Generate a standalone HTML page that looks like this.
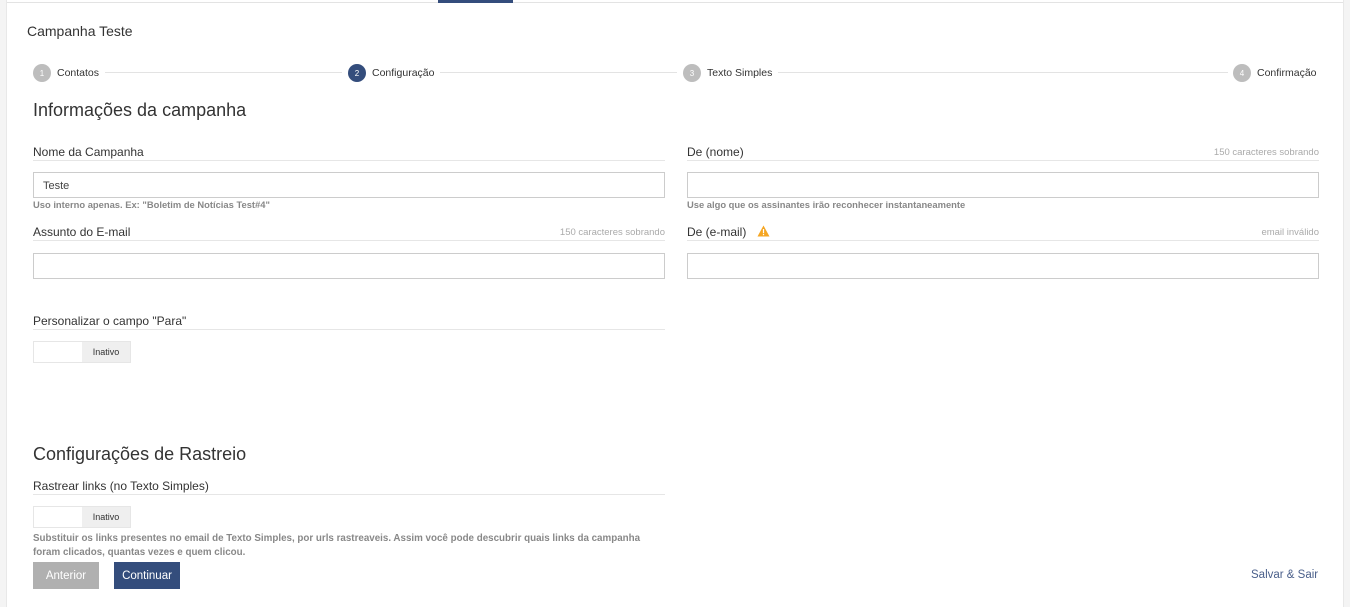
<!DOCTYPE html>
<html><head><meta charset="utf-8"><style>
*{box-sizing:border-box;margin:0;padding:0}
body{width:1350px;height:607px;overflow:hidden;background:#fff;font-family:"Liberation Sans",sans-serif;color:#333;position:relative}
.a{position:absolute}
.lstrip{left:0;top:0;width:7px;height:607px;background:#f4f4f4;border-right:1px solid #e8e8e8}
.rstrip{left:1343px;top:0;width:7px;height:607px;background:#f4f4f4;border-left:1px solid #e8e8e8}
.topline{left:7px;top:2px;width:1336px;height:1px;background:#e3e3e3}
.tab{left:438px;top:0;width:75px;height:3px;background:#344d7c}
.step{font-size:10.5px;color:#333;display:flex;align-items:center;white-space:nowrap}
.c{width:18px;height:18px;border-radius:50%;background:#bdbdbd;color:#fff;font-size:8px;display:flex;align-items:center;justify-content:center;margin-right:6px}
.c.on{background:#344d7c}
.sl{height:1px;background:#e3e3e3;top:72px}
h2{font-weight:normal;font-size:18px;color:#333}
.lbl{font-size:12px;color:#333;border-bottom:1px solid #e6e6e6;height:16px;width:632px}
.cnt{font-size:9.5px;color:#aaa;float:right;margin-top:2px}
.inp{height:26px;width:632px;border:1px solid #ccc;font-size:11px;padding:7px 9px;color:#444}
.help{font-size:9.4px;color:#888;font-weight:bold;line-height:14px}
.tog{width:98px;height:22px;border:1px solid #e6e6e6;display:flex}
.tog span{margin-left:48px;width:48px;background:#efefef;font-size:9px;color:#333;display:flex;align-items:center;justify-content:center}
.btn{height:27px;font-size:11.5px;color:#fff;display:flex;align-items:center;justify-content:center}
</style></head><body>
<div class="a lstrip"></div><div class="a rstrip"></div>
<div class="a topline"></div><div class="a tab"></div>
<div class="a" style="left:27px;top:23px;font-size:14px;color:#333">Campanha Teste</div>

<div class="a step" style="left:33px;top:64px"><div class="c">1</div>Contatos</div>
<div class="a sl" style="left:105px;width:237px"></div>
<div class="a step" style="left:348px;top:64px"><div class="c on">2</div>Configuração</div>
<div class="a sl" style="left:440px;width:237px"></div>
<div class="a step" style="left:683px;top:64px"><div class="c">3</div>Texto Simples</div>
<div class="a sl" style="left:778px;width:450px"></div>
<div class="a step" style="left:1233px;top:64px"><div class="c">4</div>Confirmação</div>

<h2 class="a" style="left:33px;top:100px">Informações da campanha</h2>

<div class="a lbl" style="left:33px;top:145px">Nome da Campanha</div>
<div class="a inp" style="left:33px;top:172px">Teste</div>
<div class="a help" style="left:33px;top:198px">Uso interno apenas. Ex: "Boletim de Notícias Test#4"</div>

<div class="a lbl" style="left:687px;top:145px">De (nome)<span class="cnt">150 caracteres sobrando</span></div>
<div class="a inp" style="left:687px;top:172px"></div>
<div class="a help" style="left:687px;top:198px">Use algo que os assinantes irão reconhecer instantaneamente</div>

<div class="a lbl" style="left:33px;top:225px">Assunto do E-mail<span class="cnt">150 caracteres sobrando</span></div>
<div class="a inp" style="left:33px;top:253px"></div>

<div class="a lbl" style="left:687px;top:225px">De (e-mail) <svg width="13" height="12" viewBox="0 0 13 12" style="margin-left:7px;vertical-align:-1px"><path d="M6.5 0.5L12.5 11.5H0.5Z" fill="#f5a623"/><rect x="5.9" y="4" width="1.2" height="4.2" fill="#fff"/><rect x="5.9" y="9" width="1.2" height="1.2" fill="#fff"/></svg><span class="cnt">email inválido</span></div>
<div class="a inp" style="left:687px;top:253px"></div>

<div class="a lbl" style="left:33px;top:314px">Personalizar o campo "Para"</div>
<div class="a tog" style="left:33px;top:341px"><span>Inativo</span></div>

<h2 class="a" style="left:33px;top:444px">Configurações de Rastreio</h2>
<div class="a lbl" style="left:33px;top:479px">Rastrear links (no Texto Simples)</div>
<div class="a tog" style="left:33px;top:506px"><span>Inativo</span></div>
<div class="a help" style="left:33px;top:532px;width:640px;font-size:9.8px;white-space:nowrap">Substituir os links presentes no email de Texto Simples, por urls rastreaveis. Assim você pode descubrir quais links da campanha<br>foram clicados, quantas vezes e quem clicou.</div>

<div class="a btn" style="left:33px;top:562px;width:66px;background:#b0b0b0">Anterior</div>
<div class="a btn" style="left:114px;top:562px;width:66px;background:#344d7c">Continuar</div>
<div class="a" style="left:1251px;top:569px;font-size:11.5px;color:#4a5f8a">Salvar &amp; Sair</div>
</body></html>
